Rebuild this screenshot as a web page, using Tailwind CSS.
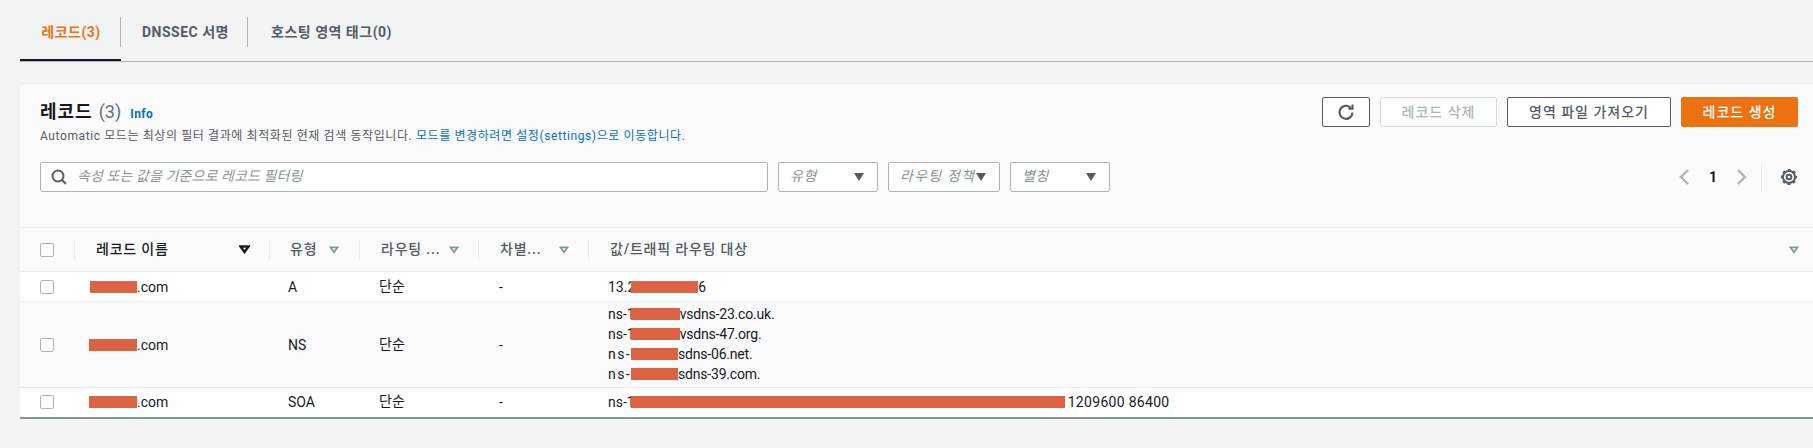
<!DOCTYPE html>
<html lang="ko">
<head>
<meta charset="utf-8">
<title>레코드</title>
<script src="https://cdn.jsdelivr.net/npm/@tailwindcss/browser@4"></script>
</head>
<body class="bg-[#f2f3f3] h-[448px] overflow-hidden text-[14px] leading-[20px] text-[#16191f] font-['Roboto','Noto_Sans_CJK_KR',sans-serif]">
    <!-- 탭 -->
    <nav class="ml-[20px] h-[62px] flex border-b border-[#aab7b8] font-bold text-[#545b64] tracking-[.5px]">
        <div class="w-[101px] h-[61px] border-b-2 border-[#16191f] pt-[17px] -mb-px">
            <a class="h-[30px] flex items-center justify-center pl-[2px] border-r border-[#aab7b8] text-[#ec7211]">레코드(3)</a>
        </div>
        <div class="w-[127px] pt-[17px]">
            <a class="h-[30px] flex items-center justify-center pl-[3px] border-r border-[#aab7b8]">DNSSEC 서명</a>
        </div>
        <div class="w-[167px] pt-[17px]">
            <a class="h-[30px] flex items-center justify-center">호스팅 영역 태그(0)</a>
        </div>
    </nav>

    <main class="ml-[20px] mt-[21px] bg-[#fafafa] border-t border-[#eaeded]">
        <!-- 헤더 -->
        <div class="h-[143px] pl-[20px] pr-[15px] pt-[12px]">
            <div class="flex justify-between h-[66px]">
                <div>
                    <h2 class="h-[28px] mt-[2px] flex items-center">
                        <span class="text-[18px] font-bold tracking-[1px]">레코드</span>
                        <span class="ml-[6px] text-[18px] text-[#687078]">(3)</span>
                        <a class="ml-[9px] mt-[4px] text-[12px] font-bold text-[#0073bb] tracking-[.4px]">Info</a>
                    </h2>
                    <p class="mt-[2px] text-[12px] leading-[16px] text-[#545b64] tracking-[.6px]">Automatic 모드는 최상의 필터 결과에 최적화된 현재 검색 동작입니다. <a class="text-[#0073bb]">모드를 변경하려면 설정(settings)으로 이동합니다.</a></p>
                </div>
                <div class="flex gap-[10px] h-[30px] mt-[1px] font-medium tracking-[1px]">
                    <button class="w-[48px] flex items-center justify-center bg-white border border-[#545b64] rounded-[2px]">
                        <svg class="w-[18px] h-[18px]" viewBox="0 0 18 18" fill="none" stroke="#545b64" stroke-width="2.2"><path d="M15.5 9.5a6.5 6.5 0 1 1-2.2-5.1"/><path d="M15.5 1.5v4.2h-4.2" stroke-linejoin="miter"/></svg>
                    </button>
                    <button class="w-[117px] pb-[1px] bg-white border border-[#d5dbdb] rounded-[2px] text-[#aab7b8]">레코드 삭제</button>
                    <button class="w-[164px] pb-[1px] bg-white border border-[#545b64] rounded-[2px] text-[#545b64]">영역 파일 가져오기</button>
                    <button class="w-[117px] pb-[1px] bg-[#ec7211] rounded-[2px] text-white">레코드 생성</button>
                </div>
            </div>
            <div class="flex items-center h-[30px]">
                <label class="relative w-[728px] h-[30px] pb-[2px] bg-white border border-[#aab7b8] rounded-[2px] flex items-center pl-[36px] italic text-[#879596] tracking-[.1px]">
                    <svg class="absolute left-[10px] top-[6px] w-[16px] h-[16px]" viewBox="0 0 16 16" fill="none" stroke="#545b64" stroke-width="2"><circle cx="7" cy="7" r="5.5"/><path d="M11 11l4 4"/></svg>
                    속성 또는 값을 기준으로 레코드 필터링
                </label>
                <div class="ml-[10px] w-[100px] h-[30px] bg-white border border-[#aab7b8] rounded-[2px] flex items-center justify-between pl-[11px] pr-[13px] italic text-[#879596] tracking-[.6px]"><span class="pb-[2px]">유형</span><span class="w-0 h-0 border-x-[5px] border-x-transparent border-t-[8px] border-t-[#545b64]"></span></div>
                <div class="ml-[10px] w-[112px] h-[30px] bg-white border border-[#aab7b8] rounded-[2px] flex items-center justify-between pl-[11px] pr-[13px] italic text-[#879596] whitespace-nowrap tracking-[1.2px]"><span class="pb-[2px]">라우팅 정책</span><span class="w-0 h-0 border-x-[5px] border-x-transparent border-t-[8px] border-t-[#545b64]"></span></div>
                <div class="ml-[10px] w-[100px] h-[30px] bg-white border border-[#aab7b8] rounded-[2px] flex items-center justify-between pl-[11px] pr-[13px] italic text-[#879596] tracking-[.6px]"><span class="pb-[2px]">별칭</span><span class="w-0 h-0 border-x-[5px] border-x-transparent border-t-[8px] border-t-[#545b64]"></span></div>
                <div class="ml-auto flex items-center h-[30px]">
                    <svg class="w-[12px] h-[18px]" viewBox="0 0 12 18" fill="none" stroke="#aab7b8" stroke-width="2.4"><path d="M10 2L3 9l7 7"/></svg>
                    <span class="w-[46px] text-center font-bold">1</span>
                    <svg class="w-[12px] h-[18px]" viewBox="0 0 12 18" fill="none" stroke="#aab7b8" stroke-width="2.4"><path d="M2 2l7 7-7 7"/></svg>
                    <span class="ml-[13px] h-[30px] border-l border-[#eaeded]"></span>
                    <svg class="ml-[18px] w-[18px] h-[18px]" viewBox="0 0 18 18" fill="none" stroke="#545b64"><circle cx="9" cy="9" r="2.3" stroke-width="2"/><circle cx="9" cy="9" r="6" stroke-width="2"/><circle cx="9" cy="9" r="7.2" stroke-width="1.8" stroke-dasharray="2.9 2.75" stroke-dashoffset="1.45"/></svg>
                </div>
            </div>
        </div>

        <!-- 테이블 -->
        <table class="w-full table-fixed border-collapse border-b-2 border-[#879596]">
            <colgroup>
                <col class="w-[54px]"><col class="w-[195px]"><col class="w-[90px]"><col class="w-[119px]"><col class="w-[110px]"><col>
            </colgroup>
            <thead class="bg-[#fafafa] border-y border-[#eaeded]">
                <tr class="h-[44px] text-[#545b64] text-left tracking-[.8px]">
                    <th class="pl-[20px]"><span class="block w-[14px] h-[14px] bg-white border border-[#aab7b8] rounded-[2px]"></span></th>
                    <th class="font-medium"><div class="h-[21px] border-l border-[#eaeded] pl-[21px] pr-[19px] flex items-center justify-between text-[#16191f]"><span class="pb-[2px]">레코드 이름</span>
                        <svg class="w-[11px] h-[9px]" viewBox="0 0 11 9" fill="none" stroke="#16191f" stroke-width="2.4"><path d="M1.5 1.5h8l-4 5.5z"/></svg></div></th>
                    <th class="font-medium"><div class="h-[21px] border-l border-[#eaeded] pl-[20px] pr-[20px] flex items-center justify-between"><span class="pb-[2px]">유형</span>
                        <svg class="w-[10px] h-[8px]" viewBox="0 0 11 9" fill="none" stroke="#879596" stroke-width="2"><path d="M1.5 1.5h8l-4 5.5z"/></svg></div></th>
                    <th class="font-medium"><div class="h-[21px] border-l border-[#eaeded] pl-[21px] pr-[19px] flex items-center justify-between"><span class="pb-[2px]">라우팅 ...</span>
                        <svg class="w-[10px] h-[8px]" viewBox="0 0 11 9" fill="none" stroke="#879596" stroke-width="2"><path d="M1.5 1.5h8l-4 5.5z"/></svg></div></th>
                    <th class="font-medium"><div class="h-[21px] border-l border-[#eaeded] pl-[21px] pr-[19px] flex items-center justify-between"><span class="pb-[2px]">차별...</span>
                        <svg class="w-[10px] h-[8px]" viewBox="0 0 11 9" fill="none" stroke="#879596" stroke-width="2"><path d="M1.5 1.5h8l-4 5.5z"/></svg></div></th>
                    <th class="font-medium"><div class="h-[21px] border-l border-[#eaeded] pl-[21px] pr-[14px] flex items-center justify-between"><span class="pb-[2px]">값/트래픽 라우팅 대상</span>
                        <svg class="w-[10px] h-[8px]" viewBox="0 0 11 9" fill="none" stroke="#879596" stroke-width="2"><path d="M1.5 1.5h8l-4 5.5z"/></svg></div></th>
                </tr>
            </thead>
            <tbody>
                <tr class="h-[30px] bg-white border-b border-[#eaeded]">
                    <td class="pl-[20px]"><span class="block w-[14px] h-[14px] bg-white border border-[#aab7b8] rounded-[2px]"></span></td>
                    <td class="pl-[16px]"><span class="inline-block align-[-1px] w-[47px] h-[12px] bg-[#da6344]"></span>.com</td>
                    <td class="pl-[19px]">A</td>
                    <td class="pl-[20px] pb-[2px]">단순</td>
                    <td class="pl-[21px]">-</td>
                    <td class="pl-[20px]">13.2<span class="inline-block align-[-1px] -ml-[4px] w-[67px] h-[12px] bg-[#da6344]"></span>6</td>
                </tr>
                <tr class="h-[86px] bg-[#fafafa] border-b border-[#eaeded]">
                    <td class="pl-[20px]"><span class="block w-[14px] h-[14px] bg-white border border-[#aab7b8] rounded-[2px]"></span></td>
                    <td class="pl-[15px]"><span class="inline-block align-[-1px] w-[48px] h-[12px] bg-[#da6344]"></span>.com</td>
                    <td class="pl-[19px]">NS</td>
                    <td class="pl-[20px] pb-[2px]">단순</td>
                    <td class="pl-[21px]">-</td>
                    <td class="pl-[20px] pb-[1px]">
                        <div>ns-1<span class="inline-block align-[-1px] -ml-[4px] w-[49px] h-[12px] bg-[#da6344]"></span><span class="tracking-[-.2px]">vsdns-23.co.uk.</span></div>
                        <div>ns-1<span class="inline-block align-[-1px] -ml-[4px] w-[49px] h-[12px] bg-[#da6344]"></span><span class="tracking-[-.2px]">vsdns-47.org.</span></div>
                        <div><span class="tracking-[1.4px]">ns-</span><span class="inline-block align-[-1px] w-[47px] h-[12px] bg-[#da6344]"></span><span class="tracking-[-.2px]">sdns-06.net.</span></div>
                        <div><span class="tracking-[1.4px]">ns-</span><span class="inline-block align-[-1px] w-[47px] h-[12px] bg-[#da6344]"></span><span class="tracking-[-.2px]">sdns-39.com.</span></div>
                    </td>
                </tr>
                <tr class="h-[30px] bg-white">
                    <td class="pl-[20px]"><span class="block w-[14px] h-[14px] bg-white border border-[#aab7b8] rounded-[2px]"></span></td>
                    <td class="pl-[15px]"><span class="inline-block align-[-1px] w-[48px] h-[12px] bg-[#da6344]"></span>.com</td>
                    <td class="pl-[19px]">SOA</td>
                    <td class="pl-[20px] pb-[2px]">단순</td>
                    <td class="pl-[21px]">-</td>
                    <td class="pl-[20px]">ns-1<span class="inline-block align-[-1px] -ml-[4px] w-[434px] h-[12px] bg-[#da6344] mr-[3px]"></span><span class="tracking-[.3px]">1209600 86400</span></td>
                </tr>
            </tbody>
        </table>
    </main>
</body>
</html>
